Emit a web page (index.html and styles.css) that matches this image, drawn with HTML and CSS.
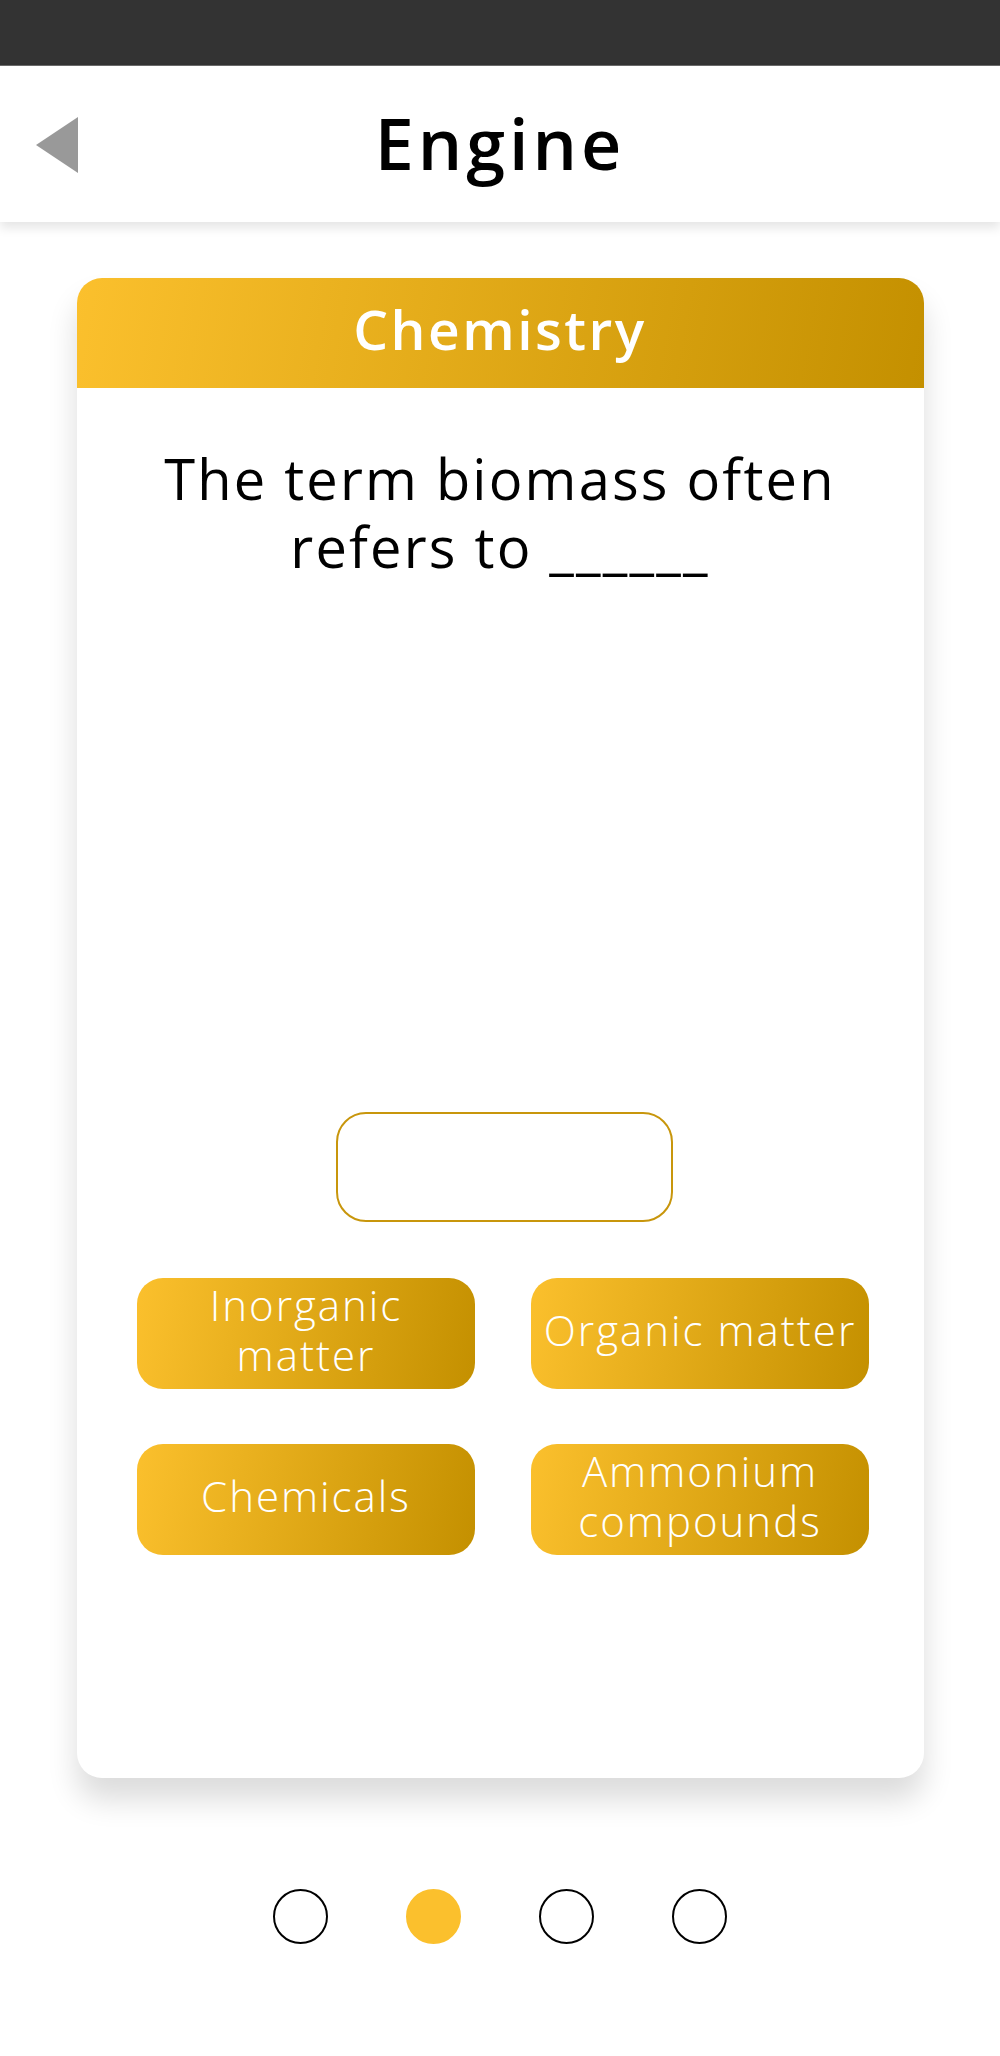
FILE: index.html
```html
<!DOCTYPE html>
<html>
<head>
<meta charset="utf-8">
<link rel="stylesheet" href="styles.css">
</head>
<body>
<div class="status"></div>
<header class="topbar">
  <svg class="back" width="42" height="56" viewBox="0 0 42 56"><polygon points="42,0 42,56 0,28" fill="#999999"/></svg>
  <h1 class="title">Engine</h1>
</header>
<main class="main">
  <section class="card">
    <div class="card-head">Chemistry</div>
    <p class="question">The term biomass often refers to ______</p>
    <div class="answer-box"></div>
    <div class="options">
      <div class="opt">Inorganic matter</div>
      <div class="opt">Organic matter</div>
      <div class="opt">Chemicals</div>
      <div class="opt">Ammonium compounds</div>
    </div>
  </section>
  <nav class="dots">
    <span class="dot"></span>
    <span class="dot active"></span>
    <span class="dot"></span>
    <span class="dot"></span>
  </nav>
</main>
</body>
</html>
```
FILE: styles.css
```css
* { box-sizing: border-box; }
html, body { margin: 0; padding: 0; background: #fff; }
body {
  width: 1000px;
  height: 2056px;
  overflow: hidden;
  font-family: "Open Sans", "Noto Sans", sans-serif;
  color: #000;
}
.status {
  height: 66px;
  background: #333333;
  border-bottom: 1px solid #6a6a6a;
}
.topbar {
  position: relative;
  height: 156px;
  background: #fff;
  display: flex;
  align-items: center;
  justify-content: center;
  box-shadow: 0 6px 10px rgba(0,0,0,0.10);
  z-index: 2;
}
.back {
  position: absolute;
  left: 36px;
  top: 51px;
}
.title {
  margin: 0;
  font-size: 70px;
  font-weight: 600;
  letter-spacing: 4px;
  line-height: 1;
  margin-top: -2px;
}
.main {
  padding-top: 56px;
  display: flex;
  flex-direction: column;
  align-items: center;
}
.card {
  width: 847px;
  height: 1500px;
  border-radius: 25px;
  background: #fff;
  box-shadow: 0 22px 30px rgba(0,0,0,0.14);
  overflow: hidden;
  display: flex;
  flex-direction: column;
  align-items: center;
}
.card-head {
  width: 100%;
  height: 110px;
  background: linear-gradient(100deg, #fbc02d 0%, #c49000 100%);
  color: #fff;
  font-size: 55px;
  font-weight: 600;
  letter-spacing: 2.5px;
  display: flex;
  align-items: center;
  justify-content: center;
  padding-bottom: 10px;
}
.question {
  margin: 56px 0 0;
  width: 760px;
  text-align: center;
  font-size: 56px;
  line-height: 68px;
  letter-spacing: 2.2px;
  font-weight: 400;
}
.answer-box {
  margin-top: 532px;
  margin-left: 8px;
  width: 337px;
  height: 110px;
  border: 2.5px solid #c8960c;
  border-radius: 30px;
}
.options {
  margin-top: 56px;
  margin-left: 6px;
  display: grid;
  grid-template-columns: 338px 338px;
  column-gap: 56px;
  row-gap: 55px;
}
.opt {
  height: 111px;
  border-radius: 26px;
  background: linear-gradient(100deg, #fbc02d 0%, #c49000 100%);
  color: #fff;
  font-size: 42px;
  font-weight: 300;
  letter-spacing: 2px;
  line-height: 50px;
  text-align: center;
  display: flex;
  align-items: center;
  justify-content: center;
  padding: 0 6px 7px;
}
.dots {
  margin-top: 111px;
  display: flex;
  gap: 78px;
}
.dot {
  width: 55px;
  height: 55px;
  border-radius: 50%;
  border: 2.5px solid #000;
}
.dot.active {
  border-color: #fbc02d;
  background: #fbc02d;
}
```
